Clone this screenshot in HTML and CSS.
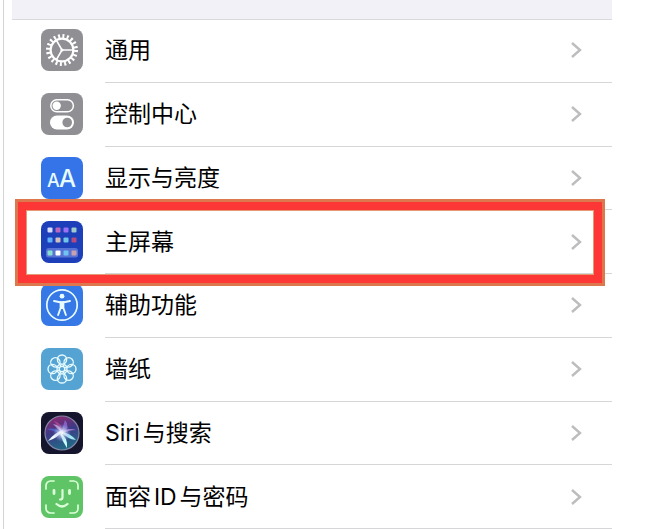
FILE: index.html
```
<!DOCTYPE html>
<html lang="zh-CN">
<head>
  <meta charset="utf-8">
  <meta name="viewport" content="width=device-width, initial-scale=1">
  <title>设置</title>
  <link rel="stylesheet" href="styles.css">
</head>
<body>

  <svg width="0" height="0" class="defs">
    <symbol id="chevron" viewBox="0 0 12 18">
      <path d="M2 2l8 7-8 7" fill="none" stroke="currentColor" stroke-width="2.4"/>
    </symbol>
  </svg>

  <main class="settings">
    <div class="group-gap"></div>
    <ul class="list">
      <li class="item">
        <a href="#general" class="row">
          <svg class="icon" viewBox="0 0 42 42">
            <rect width="42" height="42" rx="8" fill="#8f8f94"/>
            <g fill="none" stroke="#fff">
              <circle cx="21" cy="21" r="14" stroke-width="4" stroke-dasharray="2 2.398"/>
              <circle cx="21" cy="21" r="11.4" stroke-width="2.2"/>
              <path d="M21 21h11M21 21l-5.5-9.5M21 21l-5.5 9.5" stroke-width="1.5"/>
            </g>
            <circle cx="21" cy="21" r="1.6" fill="#fff"/>
          </svg>
          <span class="label">通用</span>
          <svg class="chevron"><use href="#chevron"/></svg>
        </a>
      </li>
      <li class="item">
        <a href="#control-center" class="row">
          <svg class="icon" viewBox="0 0 42 42">
            <rect width="42" height="42" rx="8" fill="#8f8f94"/>
            <rect x="9.8" y="6.8" width="22.6" height="12" rx="6" fill="none" stroke="#fff" stroke-width="1.5"/>
            <circle cx="15.7" cy="12.8" r="4.2" fill="#fff"/>
            <rect x="9" y="22.5" width="24" height="14" rx="7" fill="#fff"/>
            <circle cx="26.2" cy="29.5" r="4.8" fill="#8f8f94"/>
          </svg>
          <span class="label">控制中心</span>
          <svg class="chevron"><use href="#chevron"/></svg>
        </a>
      </li>
      <li class="item">
        <a href="#display" class="row">
          <svg class="icon" viewBox="0 0 42 42">
            <rect width="42" height="42" rx="8" fill="#3474e8"/>
            <g class="glyph" fill="#e8fbff">
              <text x="6" y="30" font-size="18">A</text>
              <text x="18" y="30" font-size="24">A</text>
            </g>
          </svg>
          <span class="label">显示与亮度</span>
          <svg class="chevron"><use href="#chevron"/></svg>
        </a>
      </li>
      <li class="item selected">
        <a href="#home-screen" class="row">
          <svg class="icon" viewBox="0 0 42 42">
            <rect width="42" height="42" rx="8" fill="#1d3fb9"/>
            <rect x="5" y="27" width="32" height="9.5" rx="2.5" fill="#5873d4"/>
            <rect x="6.5" y="6.5" width="5" height="5" rx="1" fill="#d5dcff"/>
            <rect x="14.5" y="6.5" width="5" height="5" rx="1" fill="#bc67bd"/>
            <rect x="22.5" y="6.5" width="5" height="5" rx="1" fill="#9b70f3"/>
            <rect x="30.5" y="6.5" width="5" height="5" rx="1" fill="#a0cbc8"/>
            <rect x="6.5" y="16.5" width="5" height="5" rx="1" fill="#5fb0fa"/>
            <rect x="14.5" y="16.5" width="5" height="5" rx="1" fill="#d3c1b9"/>
            <rect x="22.5" y="16.5" width="5" height="5" rx="1" fill="#70c5e8"/>
            <rect x="30.5" y="16.5" width="5" height="5" rx="1" fill="#b34a80"/>
            <rect x="6.5" y="29.5" width="5" height="5" rx="1" fill="#87dfd0"/>
            <rect x="14.5" y="29.5" width="5" height="5" rx="1" fill="#fff"/>
            <rect x="22.5" y="29.5" width="5" height="5" rx="1" fill="#70c4f3"/>
            <rect x="30.5" y="29.5" width="5" height="5" rx="1" fill="#c6a1af"/>
          </svg>
          <span class="label">主屏幕</span>
          <svg class="chevron"><use href="#chevron"/></svg>
        </a>
      </li>
      <li class="item">
        <a href="#accessibility" class="row">
          <svg class="icon" viewBox="0 0 42 42">
            <rect width="42" height="42" rx="8" fill="#3678e5"/>
            <circle cx="21" cy="21" r="15.2" fill="none" stroke="#e8fbff" stroke-width="1.7"/>
            <circle cx="21" cy="12.2" r="2.4" fill="#e8fbff"/>
            <path d="M13 17l6 1.2h4l6-1.2M19.6 18v6l-2.5 7M22.4 18v6l2.5 7" fill="none" stroke="#e8fbff" stroke-width="1.9" stroke-linecap="round" stroke-linejoin="round"/>
            <path d="M19 17.5h4V25h-4z" fill="#e8fbff"/>
          </svg>
          <span class="label">辅助功能</span>
          <svg class="chevron"><use href="#chevron"/></svg>
        </a>
      </li>
      <li class="item">
        <a href="#wallpaper" class="row">
          <svg class="icon" viewBox="0 0 42 42">
            <defs>
              <circle id="petal" cx="21" cy="11.6" r="4.6"/>
            </defs>
            <rect width="42" height="42" rx="8" fill="#55a3d3"/>
            <g fill="none" stroke="#e6fbff" stroke-width="1.4">
              <use href="#petal"/>
              <use href="#petal" transform="rotate(45 21 21)"/>
              <use href="#petal" transform="rotate(90 21 21)"/>
              <use href="#petal" transform="rotate(135 21 21)"/>
              <use href="#petal" transform="rotate(180 21 21)"/>
              <use href="#petal" transform="rotate(225 21 21)"/>
              <use href="#petal" transform="rotate(270 21 21)"/>
              <use href="#petal" transform="rotate(315 21 21)"/>
              <circle cx="21" cy="21" r="2.8"/>
              <path d="M22 18.300l2-3M23.600 20l3.500-1.500M23.600 22l3.500 1.500M22 23.700l2 3M20 23.700l-2 3M18.400 22l-3.500 1.500M18.400 20l-3.500-1.500M20 18.300l-2-3" stroke-width="1.200"/>
            </g>
          </svg>
          <span class="label">墙纸</span>
          <svg class="chevron"><use href="#chevron"/></svg>
        </a>
      </li>
      <li class="item">
        <a href="#siri" class="row">
          <svg class="icon" viewBox="0 0 42 42">
            <defs>
              <linearGradient id="orb" x1="0.3" y1="0" x2="0.6" y2="1">
                <stop offset="0" stop-color="#8e2870"/>
                <stop offset="0.45" stop-color="#3d3a86"/>
                <stop offset="1" stop-color="#1d6f86"/>
              </linearGradient>
              <radialGradient id="glow">
                <stop offset="0" stop-color="#fff"/>
                <stop offset="0.35" stop-color="#dfe8ff" stop-opacity="0.7"/>
                <stop offset="1" stop-color="#90a8f0" stop-opacity="0"/>
              </radialGradient>
            </defs>
            <rect width="42" height="42" rx="8" fill="#16152e"/>
            <circle cx="21" cy="21" r="17" fill="url(#orb)" stroke="#8386a6" stroke-width="1.2"/>
            <path d="M21 21L13 9q8 1 8 12z" fill="#c44f9f" opacity="0.6"/>
            <path d="M20 21l4-13q6 7-2 13z" fill="#9a74dc" opacity="0.7"/>
            <path d="M21 22L6 17q9-2 15 5z" fill="#4b6fdc" opacity="0.7"/>
            <path d="M20 20q7-5 15-2-8 0-14 4z" fill="#b98fe0" opacity="0.8"/>
            <path d="M22 18q-5 8-15 11 6-8 15-11z" fill="#f4fcff"/>
            <path d="M19 21q8 4 7 15-5-7-7-15z" fill="#c8fffb"/>
            <path d="M21 20q8 1 14 8-9-1-14-8z" fill="#a4e6f2"/>
            <path d="M22 22L12 12q8 1 10 10z" fill="#d9bdf0" opacity="0.7"/>
            <circle cx="21" cy="21" r="9" fill="url(#glow)"/>
          </svg>
          <span class="label">Siri与搜索</span>
          <svg class="chevron"><use href="#chevron"/></svg>
        </a>
      </li>
      <li class="item">
        <a href="#face-id" class="row">
          <svg class="icon" viewBox="0 0 42 42">
            <rect width="42" height="42" rx="8" fill="#5fc466"/>
            <g fill="none" stroke="#dcffd9" stroke-width="1.7" stroke-linecap="round">
              <path d="M5 13V9.500A4.500 4.500 0 0 1 9.500 5H13M29 5h3.500A4.500 4.500 0 0 1 37 9.500V13M37 29v3.500a4.500 4.500 0 0 1-4.500 4.500H29M13 37H9.500A4.500 4.500 0 0 1 5 32.500V29"/>
              <path d="M13 14.500v3M28.500 14.500v3" stroke-width="2.8"/>
              <path d="M21.500 14v7.500q0 2-2.500 2M15.500 28q5.500 5 11 0" stroke-width="2.2"/>
            </g>
          </svg>
          <span class="label">面容ID与密码</span>
          <svg class="chevron"><use href="#chevron"/></svg>
        </a>
      </li>
    </ul>
  </main>

</body>
</html>
```
FILE: styles.css
```
* {
  box-sizing: border-box;
}

body {
  margin: 0 0 0 3px;
  border-left: 1px solid #d4d4d4;
  background-color: #fff;
  font-family: Inter, "Noto Sans CJK SC", sans-serif;
  color: #000;
}

.defs {
  position: absolute;
}

.settings {
  display: flex;
  flex-direction: column;
  min-height: 100vh;
  margin: 0 50px 0 8px;
}

.group-gap {
  height: 20px;
  background-color: #f2f1f7;
  border-bottom: 1px solid #dadadd;
}

.list {
  flex: 1;
  display: flex;
  flex-direction: column;
  list-style: none;
  margin: -1px 0 0;
  padding: 0;
}

.item {
  flex: 1;
  display: flex;
  position: relative;
}

.row {
  flex: 1;
  display: flex;
  align-items: center;
  padding: 0 0 1px 29px;
  color: inherit;
  text-decoration: none;
}

/* the separator starts under the label, not under the icon */
.item::before {
  content: "";
  position: absolute;
  left: 93px;
  right: 0;
  bottom: 0;
  height: 1px;
  background-color: #d6d6d8;
}

.icon {
  width: 42px;
  height: 42px;
  margin-right: 22px;
}

.glyph {
  font-family: Inter, sans-serif;
  font-weight: 500;
}

.label {
  flex: 1;
  font-size: 23px;
  line-height: 32px;
  text-autospace: normal;
}

.chevron {
  width: 12px;
  height: 18px;
  margin-right: 30px;
  color: #bdbdc0;
}

/* red frame around the selected row */
.selected::after {
  content: "";
  position: absolute;
  z-index: 1;
  top: -11px;
  right: 7px;
  bottom: -12px;
  left: 3px;
  border: 3px solid #dd774e;
  outline: 8px solid #fd3735;
  outline-offset: -11px;
  box-shadow: inset 0 0 0 9px #e39a72;
  pointer-events: none;
}
```
